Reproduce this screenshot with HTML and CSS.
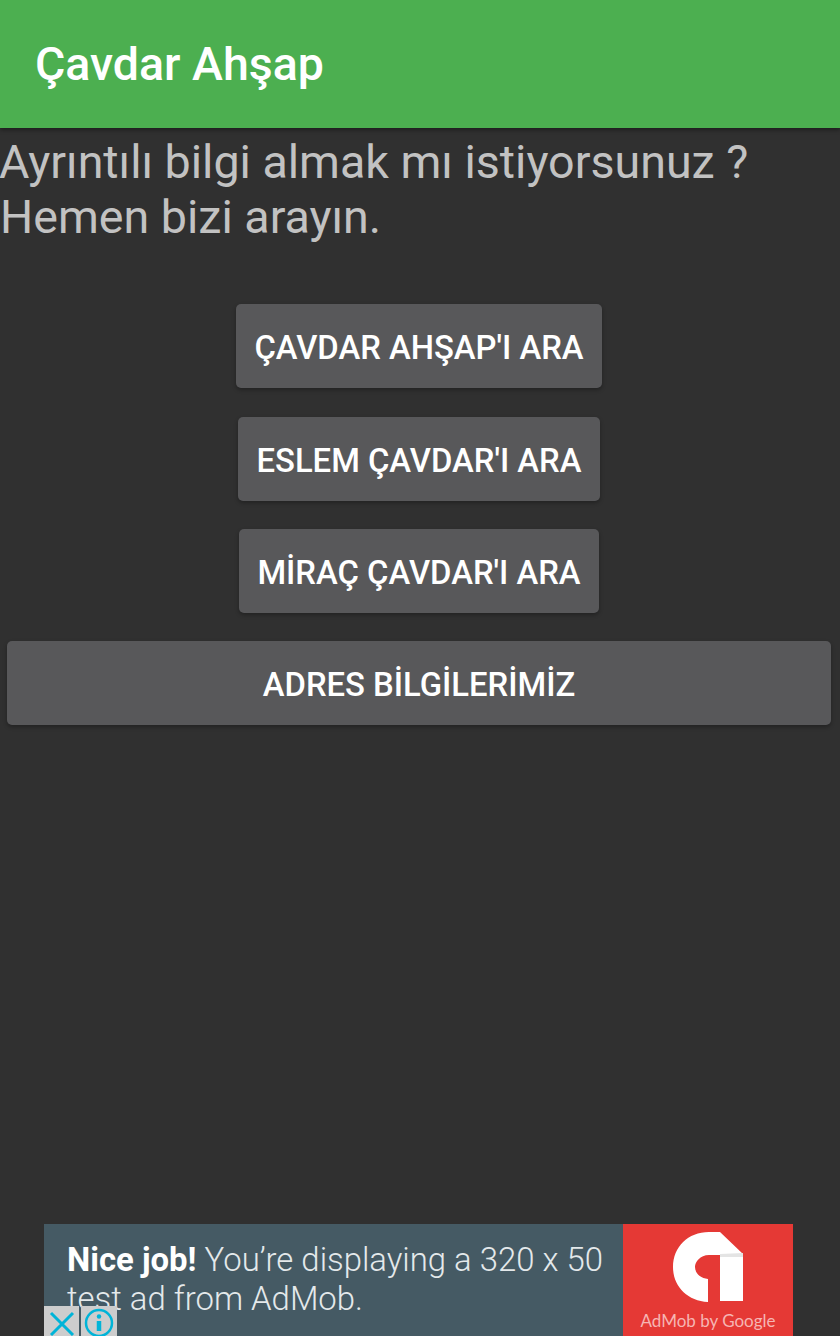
FILE: index.html
```html
<!DOCTYPE html>
<html lang="tr">
<head>
  <meta charset="UTF-8">
  <title>Çavdar Ahşap</title>
  <link rel="stylesheet" href="styles.css">
</head>
<body>
  <header class="toolbar">Çavdar Ahşap</header>
  <main class="icerik">
    <p class="bilgi">Ayrıntılı bilgi almak mı istiyorsunuz ?<br>Hemen bizi arayın.</p>
    <div class="butonlar">
      <button class="buton ilk">ÇAVDAR AHŞAP'I ARA</button>
      <button class="buton">ESLEM ÇAVDAR'I ARA</button>
      <button class="buton">MİRAÇ ÇAVDAR'I ARA</button>
      <button class="buton genis">ADRES BİLGİLERİMİZ</button>
    </div>
  </main>
  <div class="reklam">
    <div class="reklam-metin"><b>Nice job!</b> You’re displaying a 320 x 50 test ad from AdMob.</div>
    <div class="reklam-logo">
      <svg class="logo" viewBox="0 0 70 70" width="70" height="70">
        <path d="M47 0 L70 22 L70 69 L47 69 L47 23 L36 23 C27 23 22 30 22 35 C22 41 27 46 35 47 L35 70 C14 69 0 54 0 35 C0 15 15 0 36 0 Z" fill="#fff"/>
        <path d="M47 22 L70 21 L70 25 L47 25 Z" fill="#e4e4e4"/>
      </svg>
      <div class="logo-yazi">AdMob by Google</div>
    </div>
    <div class="reklam-ikonlar">
      <span class="ikon">
        <svg viewBox="0 0 36 30" width="36" height="30"><path d="M7 7 L29 29 M29 7 L7 29" stroke="#00b4d8" stroke-width="3" fill="none"/></svg>
      </span>
      <span class="ikon ikon-bilgi">
        <svg viewBox="0 0 36 30" width="36" height="30">
          <circle cx="18" cy="17" r="13" stroke="#00b4d8" stroke-width="2.5" fill="none"/>
          <circle cx="18" cy="10.5" r="2.2" fill="#00b4d8"/>
          <path d="M18 15 V25" stroke="#00b4d8" stroke-width="4.5" fill="none"/>
        </svg>
      </span>
    </div>
  </div>
</body>
</html>
```

FILE: styles.css
```css
html, body {
  height: 100%;
}
body {
  margin: 0;
  height: 1336px;
  overflow: hidden;
  background: #303030;
  font-family: Roboto, sans-serif;
  display: flex;
  flex-direction: column;
}
.toolbar {
  height: 128px;
  box-sizing: border-box;
  padding-left: 35px;
  line-height: 128px;
  flex-shrink: 0;
  background: #4caf50;
  color: #fff;
  font-size: 46.5px;
  font-weight: 500;
  box-shadow: 0 2px 4px rgba(0, 0, 0, 0.4);
}
.icerik {
  flex: 1;
}
.bilgi {
  margin: 7px 0 0;
  font-size: 46.6px;
  line-height: 55px;
  color: #c2c2c2;
  text-indent: -1px;
}
.butonlar {
  margin-top: 59px;
  display: flex;
  flex-direction: column;
  align-items: center;
  gap: 28px;
  padding: 0 9px 0 7px;
}
.buton {
  height: 84px;
  padding: 4px 18.5px 0;
  border: 0;
  border-radius: 5px;
  background: #58585a;
  color: #fff;
  font-family: Roboto, sans-serif;
  font-size: 32.8px;
  font-weight: 500;
  box-shadow: 0 2px 4px rgba(0, 0, 0, 0.3);
}
.ilk {
  margin-bottom: 1px;
}
.genis {
  width: 100%;
}
.reklam {
  position: relative;
  flex-shrink: 0;
  margin-left: 44px;
  width: 749px;
  height: 112px;
  background: #455a64;
  display: flex;
  overflow: hidden;
}
.reklam-metin {
  width: 579px;
  box-sizing: border-box;
  padding: 16px 0 0 23px;
  color: #e4e9eb;
  font-size: 32.9px;
  line-height: 39px;
  font-weight: 300;
}
.reklam-metin b {
  font-weight: 700;
  color: #fff;
}
.reklam-logo {
  flex: 1;
  background: #e53935;
  display: flex;
  flex-direction: column;
  align-items: center;
}
.logo {
  margin-top: 8px;
}
.logo-yazi {
  margin-top: 8px;
  color: #f6b5b3;
  font-family: Lato, sans-serif;
  font-size: 17px;
  line-height: 22px;
  white-space: nowrap;
}
.reklam-ikonlar {
  position: absolute;
  left: 0;
  bottom: 0;
  display: flex;
  gap: 2px;
}
.ikon {
  display: block;
  width: 35px;
  height: 30px;
  background: #cdcdcd;
}
.ikon-bilgi {
  width: 36px;
}
.ikon svg {
  display: block;
}
```
